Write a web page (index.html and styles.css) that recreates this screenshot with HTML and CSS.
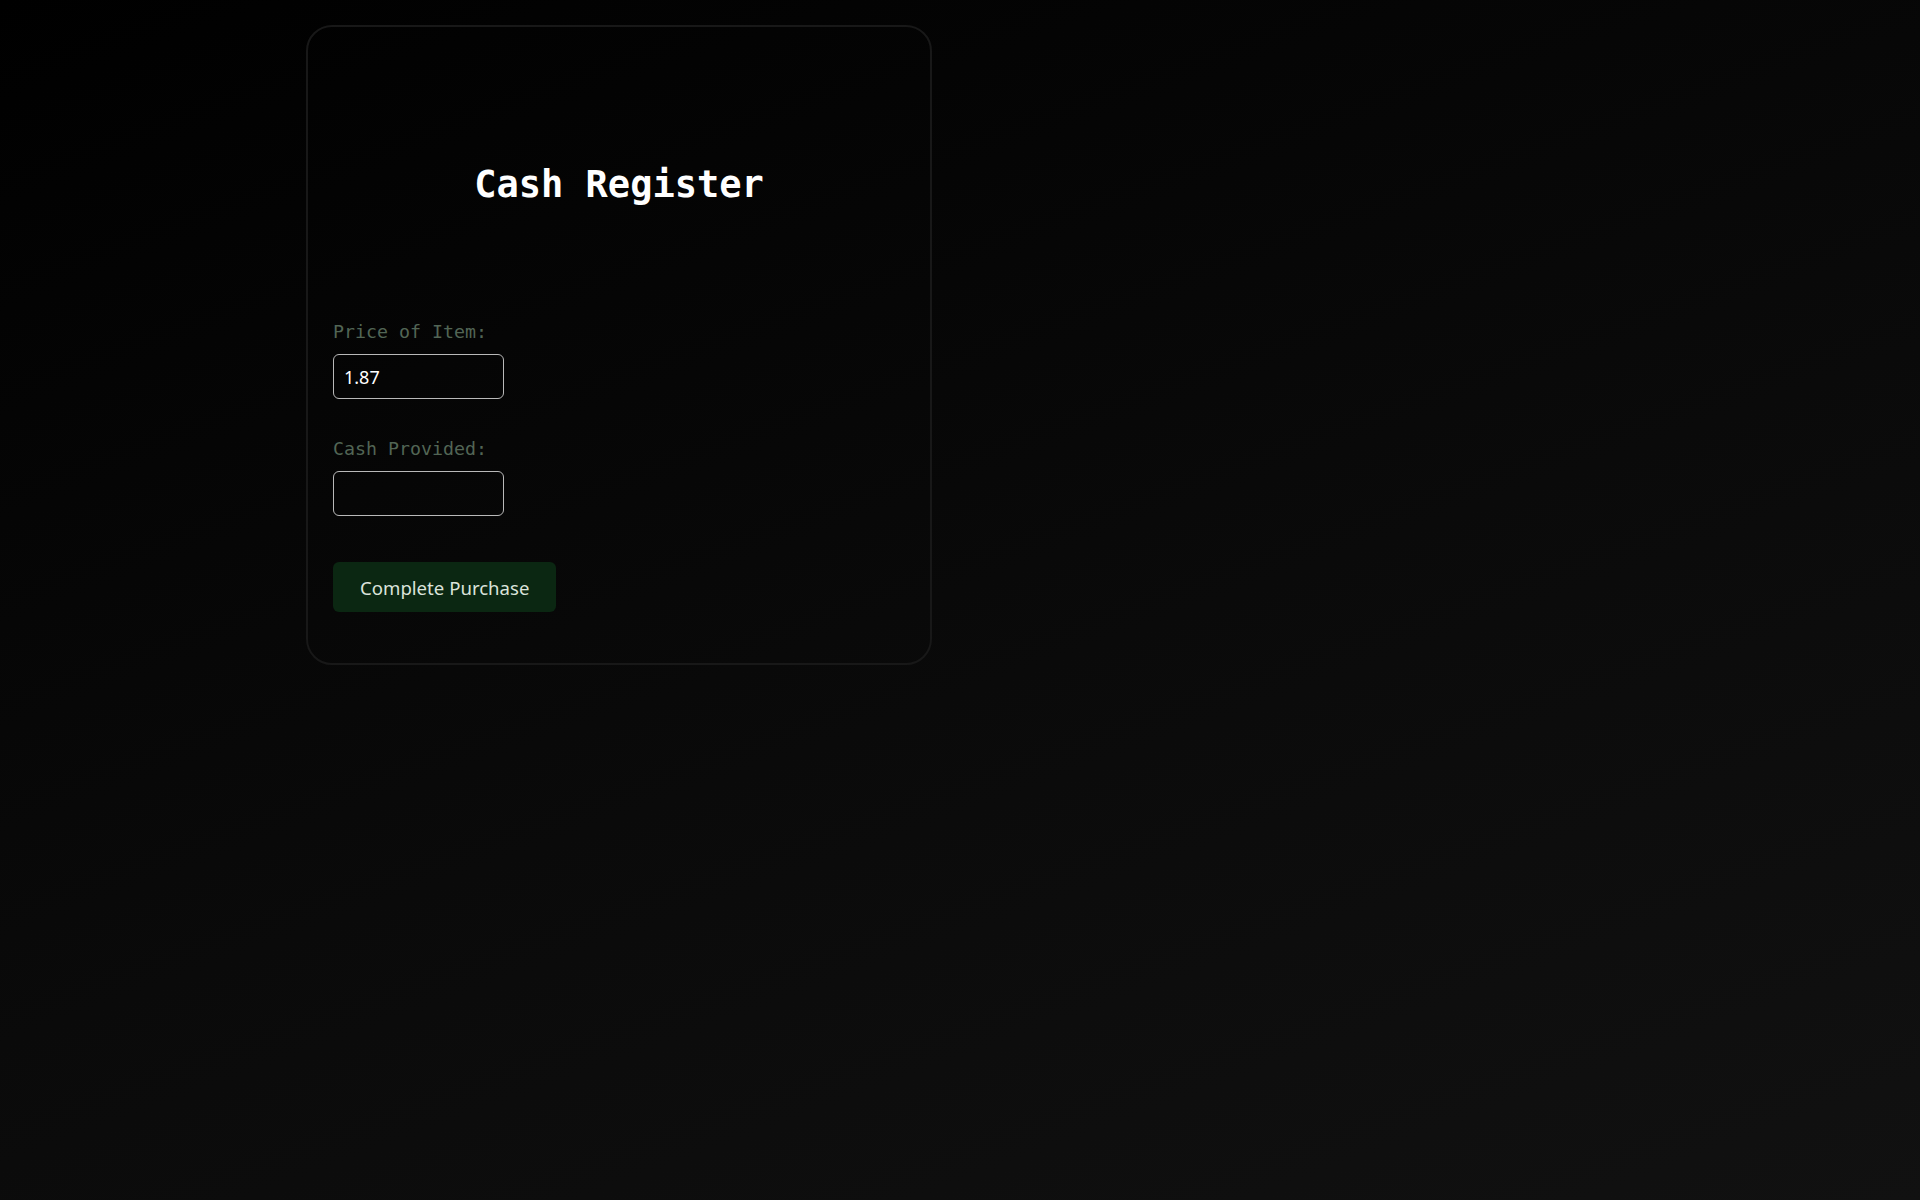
FILE: index.html
```html
<!DOCTYPE html>
<html lang="en">
<head>
<meta charset="utf-8">
<title>Cash Register</title>
<link rel="stylesheet" href="styles.css">
</head>
<body>
<main class="page">
  <section class="card">
    <h1 class="title">Cash Register</h1>
    <div class="field">
      <label class="label" for="price">Price of Item:</label>
      <input class="input" id="price" type="text" value="1.87">
    </div>
    <div class="field">
      <label class="label" for="cash">Cash Provided:</label>
      <input class="input" id="cash" type="text" value="">
    </div>
    <button class="btn" type="button">Complete Purchase</button>
  </section>
</main>
</body>
</html>
```

FILE: styles.css
```css
* { box-sizing: border-box; }
html, body { margin: 0; padding: 0; }
body {
  min-height: 100vh;
  background: linear-gradient(160deg, #000000 0%, #0a0a0a 55%, #111111 100%);
  font-family: "DejaVu Sans Mono", "Liberation Mono", monospace;
}
.page {
  padding: 25px 0 0 306px;
  min-height: 100vh;
}
.card {
  width: 626px;
  border: 2px solid #181818;
  border-radius: 26px;
  padding: 25px;
  display: flex;
  flex-direction: column;
  align-items: flex-start;
}
.title {
  align-self: stretch;
  margin: 112px 0 115px;
  font-size: 37px;
  line-height: 42px;
  font-weight: bold;
  color: #ffffff;
  text-align: center;
}
.field {
  display: flex;
  flex-direction: column;
  align-items: flex-start;
}
.field + .field { margin-top: 39px; }
.label {
  font-size: 18.3px;
  line-height: 21px;
  color: #526555;
  margin-bottom: 12px;
}
.input {
  width: 171px;
  height: 45px;
  border: 1px solid #b9b9b9;
  border-radius: 6px;
  background: transparent;
  color: #ffffff;
  padding: 0 10px;
  font-family: "Noto Sans", "Open Sans", sans-serif;
  font-size: 18px;
  outline: none;
}
.btn {
  margin-top: 46px;
  margin-bottom: 26px;
  height: 50px;
  padding: 0 27px;
  border: none;
  border-radius: 6px;
  background: #0b2712;
  color: #dbe3db;
  font-family: "Noto Sans", "Open Sans", sans-serif;
  font-size: 18.6px;
  cursor: pointer;
}
```
